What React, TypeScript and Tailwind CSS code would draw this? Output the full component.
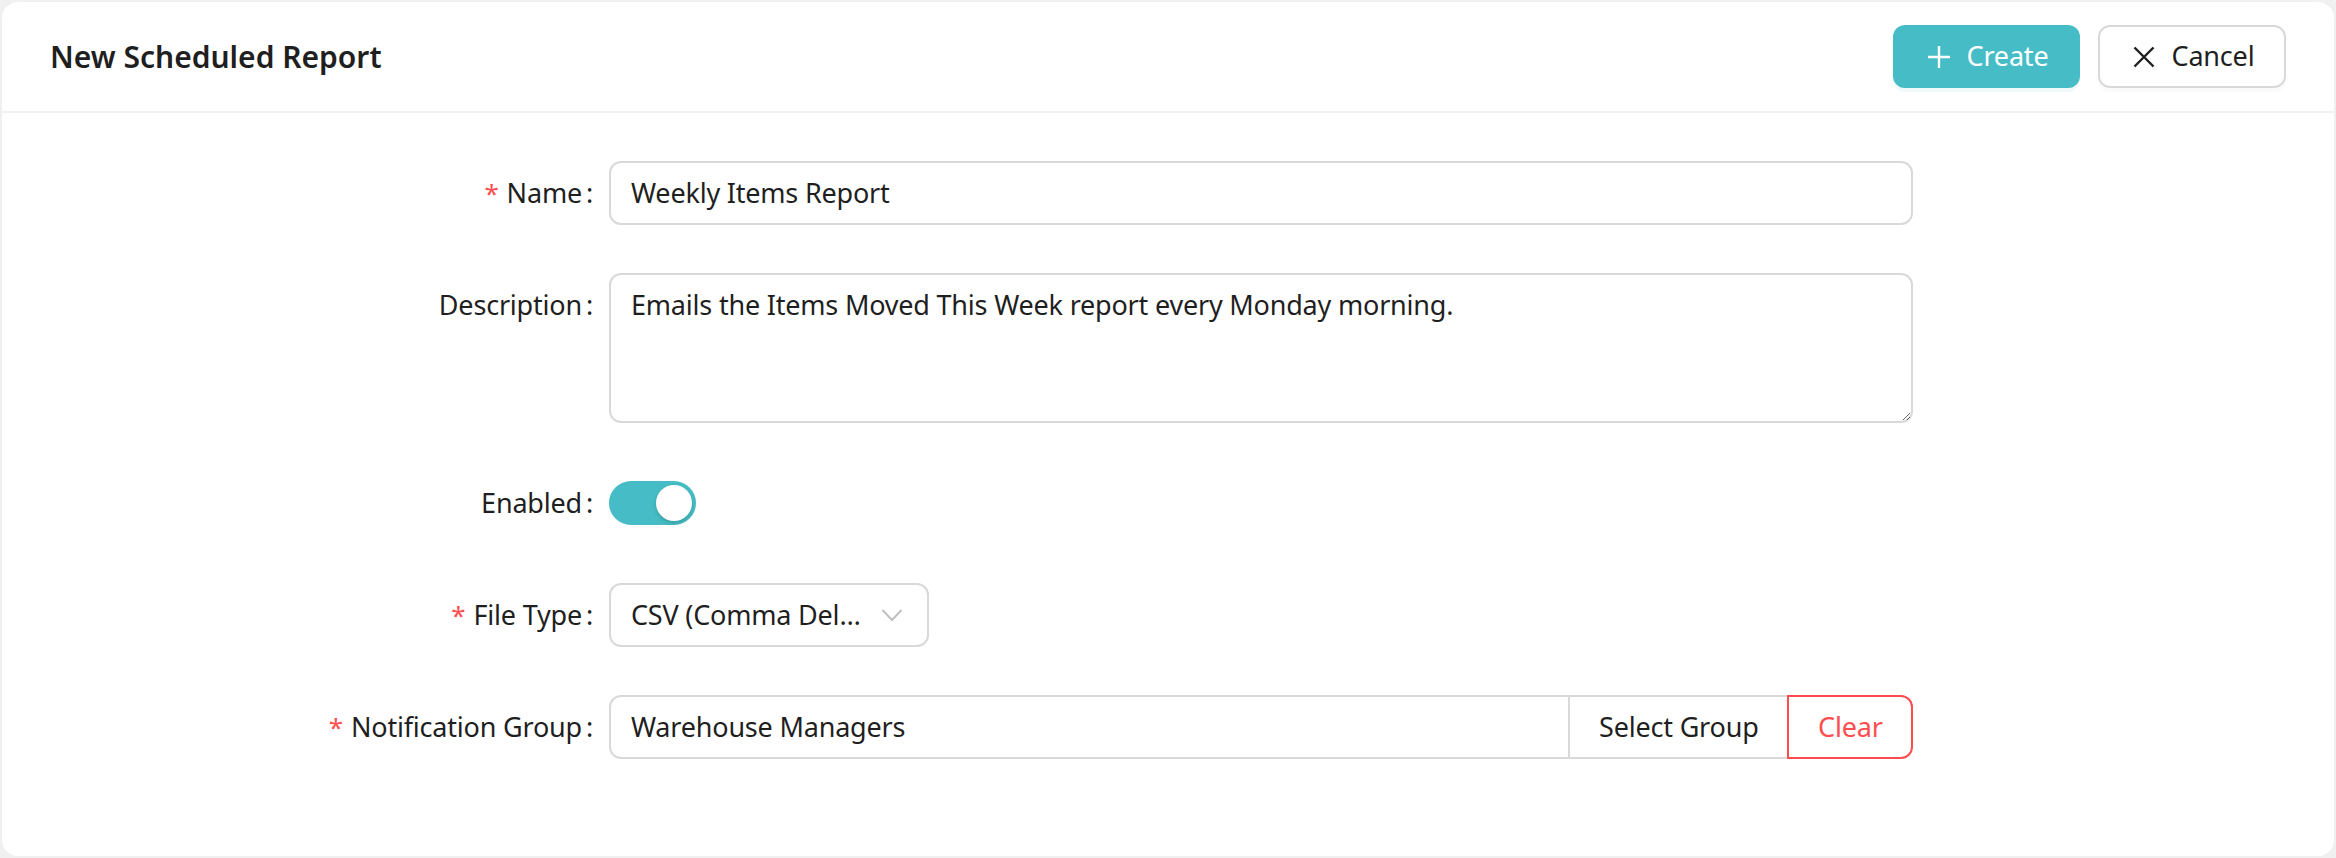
import { ReactNode } from "react";

const labelCls =
  "w-[25%] shrink-0 h-[64px] flex items-center justify-end text-[27px] tracking-[-0.2px] text-[#1f1f1f]";

function FormRow({ label, required, children }: { label: string; required?: boolean; children: ReactNode }) {
  return (
    <div className="flex mb-[48px]">
      <div className={labelCls}>
        {required && <span className="text-[#ff4d4f] text-[26px] mr-[8px] leading-none">*</span>}
        <span>{label}</span>
        <span className="ml-[4px] mr-[16px]">:</span>
      </div>
      <div className="w-[58.333%] flex items-center min-h-[64px]">{children}</div>
    </div>
  );
}

function PlusIcon() {
  return (
    <svg width="28" height="28" viewBox="0 0 28 28" fill="none" stroke="currentColor" strokeWidth="2.4" strokeLinecap="butt">
      <path d="M14 3v22M3 14h22" />
    </svg>
  );
}

function CloseIcon() {
  return (
    <svg width="28" height="28" viewBox="0 0 28 28" fill="none" stroke="currentColor" strokeWidth="2.4">
      <path d="M4.5 4.5l19 19M23.5 4.5l-19 19" />
    </svg>
  );
}

function ChevronDown() {
  return (
    <svg width="22" height="14" viewBox="0 0 22 14" fill="none" stroke="#bfbfbf" strokeWidth="2">
      <path d="M1.5 2l9.5 10L20.5 2" />
    </svg>
  );
}

export default function App() {
  return (
    <div className="min-h-screen bg-[#f0f0f0] p-[2px] font-['Noto_Sans',sans-serif] text-[#1f1f1f]">
      <div className="bg-white rounded-[16px] h-[854px] overflow-hidden">
        <header className="h-[111px] border-b-2 border-[#f0f0f0] px-[48px] flex items-center justify-between">
          <h1 className="text-[30px] font-semibold text-[#1f1f1f]">New Scheduled Report</h1>
          <div className="flex items-center gap-[18px] text-[27px] tracking-[-0.2px]">
            <button className="w-[187px] h-[63px] rounded-[12px] bg-[#46bdc6] text-white flex items-center justify-center gap-[14px] shadow-[0_4px_0_rgba(5,145,155,0.06)]">
              <PlusIcon />
              <span>Create</span>
            </button>
            <button className="w-[188px] h-[63px] rounded-[12px] bg-white border-2 border-[#d9d9d9] flex items-center justify-center gap-[14px] shadow-[0_4px_0_rgba(0,0,0,0.02)]">
              <CloseIcon />
              <span>Cancel</span>
            </button>
          </div>
        </header>

        <div className="px-[48px] pt-[48px] text-[27px] tracking-[-0.2px]">
          <FormRow label="Name" required>
            <div className="w-full h-[64px] border-2 border-[#d9d9d9] rounded-[12px] px-[20px] flex items-center">
              Weekly Items Report
            </div>
          </FormRow>

          <div className="flex mb-[48px]">
            <div className={labelCls + " self-start"}>
              <span>Description</span>
              <span className="ml-[4px] mr-[16px]">:</span>
            </div>
            <div className="w-[58.333%]">
              <textarea
                readOnly
                value="Emails the Items Moved This Week report every Monday morning."
                className="block w-full h-[150px] border-2 border-[#d9d9d9] rounded-[12px] px-[20px] py-[8px] text-[27px] tracking-[-0.2px] leading-[44px] text-[#1f1f1f] outline-none resize-y"
              />
            </div>
          </div>

          <FormRow label="Enabled">
            <div className="w-[87px] h-[44px] rounded-full bg-[#46bdc6] p-[4px] flex justify-end">
              <div className="w-[36px] h-[36px] rounded-full bg-white shadow-[0_2px_4px_rgba(0,35,11,0.2)]" />
            </div>
          </FormRow>

          <FormRow label="File Type" required>
            <div className="w-[320px] h-[64px] border-2 border-[#d9d9d9] rounded-[12px] pl-[20px] pr-[24px] flex items-center">
              <span className="flex-1 truncate pr-[20px]">CSV (Comma Delimited)</span>
              <ChevronDown />
            </div>
          </FormRow>

          <FormRow label="Notification Group" required>
            <div className="w-full h-[64px] flex">
              <div className="flex-1 border-2 border-[#d9d9d9] rounded-l-[12px] px-[20px] flex items-center">
                Warehouse Managers
              </div>
              <button className="w-[221px] -ml-[2px] border-2 border-[#d9d9d9] flex items-center justify-center bg-white">
                Select Group
              </button>
              <button className="w-[126px] -ml-[2px] border-2 border-[#ff4d4f] rounded-r-[12px] flex items-center justify-center text-[#ff4d4f] bg-white">
                Clear
              </button>
            </div>
          </FormRow>
        </div>
      </div>
    </div>
  );
}
